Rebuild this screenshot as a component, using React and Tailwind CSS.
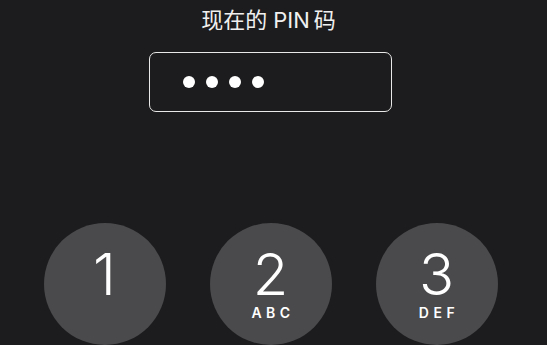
import React from 'react';

const keys = [
  { n: '1', l: '' },
  { n: '2', l: 'ABC' },
  { n: '3', l: 'DEF' },
];

export default function App() {
  return (
    <div
      className="w-[547px] h-[345px] overflow-hidden bg-[#1c1c1e] flex flex-col items-center pr-[7px] text-white"
      style={{ fontFamily: 'Inter, "Noto Sans CJK SC", sans-serif' }}
    >
      {/* Title */}
      <div className="pt-[5px] pr-[3px] text-[22px] leading-[30px] text-[#f0f0f0]">
        现在的<span className="ml-[6px]">PIN</span><span className="ml-[4px]">码</span>
      </div>

      {/* PIN field */}
      <div className="mt-[17px] w-[243px] h-[60px] border-[1.5px] border-[#e8e8e8] rounded-[7px] flex items-center pl-[33px] gap-[11px]">
        {Array(4).fill(0).map((_, i) => (
          <div key={i} className="w-[12px] h-[12px] rounded-full bg-white" />
        ))}
      </div>

      {/* Keypad */}
      <div className="mt-[111px] ml-[1px] flex gap-[44px]">
        {keys.map(k => (
          <div key={k.n} className="w-[122px] h-[122px] shrink-0 rounded-full bg-[#4a4a4c] flex flex-col items-center pt-[26px]">
            <span className="text-[58px] leading-[50px] font-light">{k.n}</span>
            {k.l && (
              <span className="mt-[7px] pl-[5px] text-[14px] leading-[13px] font-semibold tracking-[4.5px]">{k.l}</span>
            )}
          </div>
        ))}
      </div>
    </div>
  );
}
